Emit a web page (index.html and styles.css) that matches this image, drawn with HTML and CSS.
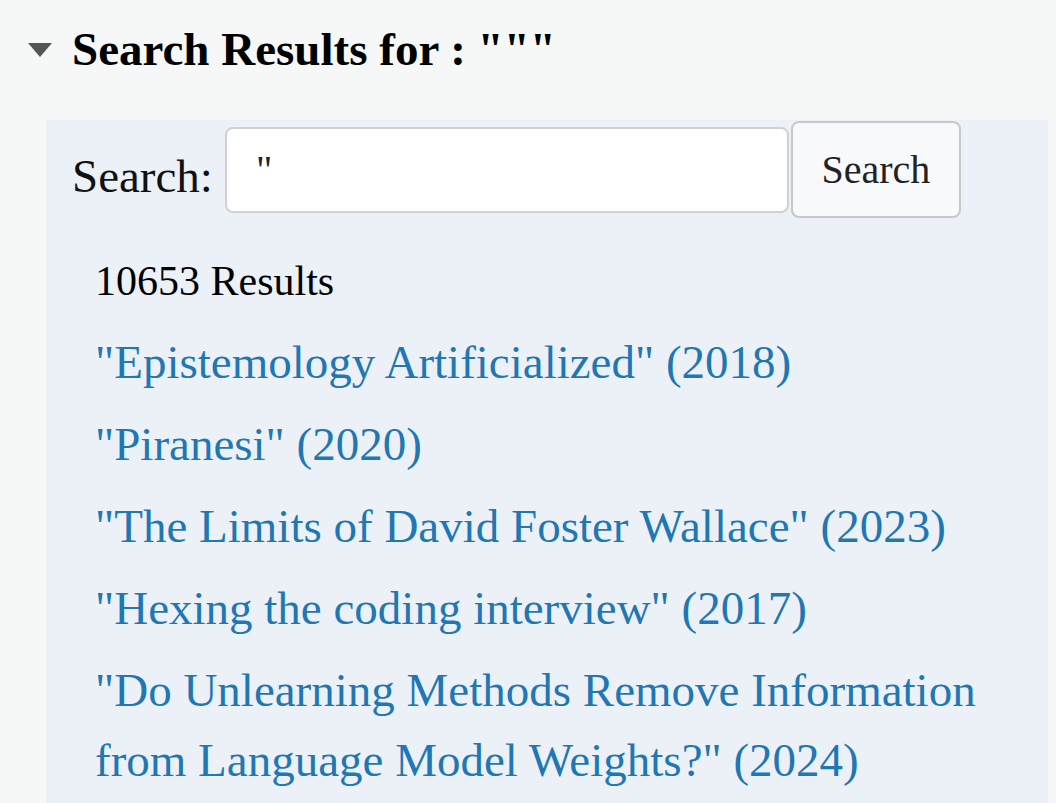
FILE: index.html
```html
<!DOCTYPE html>
<html lang="en">
<head>
<meta charset="utf-8">
<title>Search Results</title>
<link rel="stylesheet" href="styles.css">
</head>
<body>
<details class="results" open>
  <summary class="summary">
    <svg class="caret" width="24" height="14" viewBox="0 0 24 14"><polygon points="0,0 24,0 12,14" fill="#555"/></svg>
    <span class="summary-title">Search Results for : """</span>
  </summary>
  <div class="panel">
    <form class="search-row" onsubmit="return false">
      <label class="search-label" for="q">Search:</label>
      <input class="search-input" id="q" type="text" value='"'>
      <button class="search-button" type="submit">Search</button>
    </form>
    <div class="count">10653 Results</div>
    <ul class="result-list">
      <li class="result"><a class="result-link" href="#">"Epistemology Artificialized" (2018)</a></li>
      <li class="result"><a class="result-link" href="#">"Piranesi" (2020)</a></li>
      <li class="result"><a class="result-link" href="#">"The Limits of David Foster Wallace" (2023)</a></li>
      <li class="result"><a class="result-link" href="#">"Hexing the coding interview" (2017)</a></li>
      <li class="result"><a class="result-link" href="#">"Do Unlearning Methods Remove Information from Language Model Weights?" (2024)</a></li>
    </ul>
  </div>
</details>
</body>
</html>
```
FILE: styles.css
```css
html, body {
  margin: 0;
  padding: 0;
  background: #f6f8f8;
  font-family: "Liberation Serif", "Times New Roman", serif;
  color: #111;
  overflow: hidden;
}

.results {
  display: block;
}

.summary {
  list-style: none;
  display: flex;
  align-items: flex-start;
  padding: 22px 0 0 28px;
  height: 120px;
  box-sizing: border-box;
  cursor: pointer;
}

.summary::-webkit-details-marker {
  display: none;
}

.caret {
  margin-top: 21px;
  flex: none;
}

.summary-title {
  margin-left: 20px;
  font-size: 47px;
  font-weight: bold;
  line-height: 54px;
  color: #000;
}

.panel {
  margin: 0 8px 0 46px;
  padding: 1px 0 40px 26px;
  background: #ecf1f7;
  min-height: 800px;
}

.search-row {
  display: flex;
  align-items: center;
  margin: 0;
}

.search-label {
  font-size: 47px;
  line-height: 54px;
  margin-top: 12px;
  margin-right: 12px;
  color: #111;
}

.search-input {
  width: 564px;
  height: 86px;
  box-sizing: border-box;
  border: 2px solid #cfd1d4;
  border-radius: 8px;
  background: #fff;
  padding: 0 0 0 29px;
  font-family: "Liberation Serif", "Times New Roman", serif;
  font-size: 40px;
  color: #222;
  outline: none;
}

.search-button {
  margin-left: 2px;
  width: 170px;
  height: 97px;
  box-sizing: border-box;
  border: 2px solid #c7c8ca;
  border-radius: 8px;
  background: #f8f9fb;
  font-family: "Liberation Serif", "Times New Roman", serif;
  font-size: 40px;
  color: #222;
  padding: 0;
}

.count {
  margin: 28px 0 0 23px;
  font-size: 42px;
  line-height: 70px;
  color: #000;
}

.result-list {
  list-style: none;
  margin: 11px 0 0 0;
  padding: 0 0 0 23px;
}

.result {
  font-size: 47px;
  line-height: 70px;
  margin-bottom: 12px;
}

.result-link {
  color: #1f77b4;
  text-decoration: none;
}
```
